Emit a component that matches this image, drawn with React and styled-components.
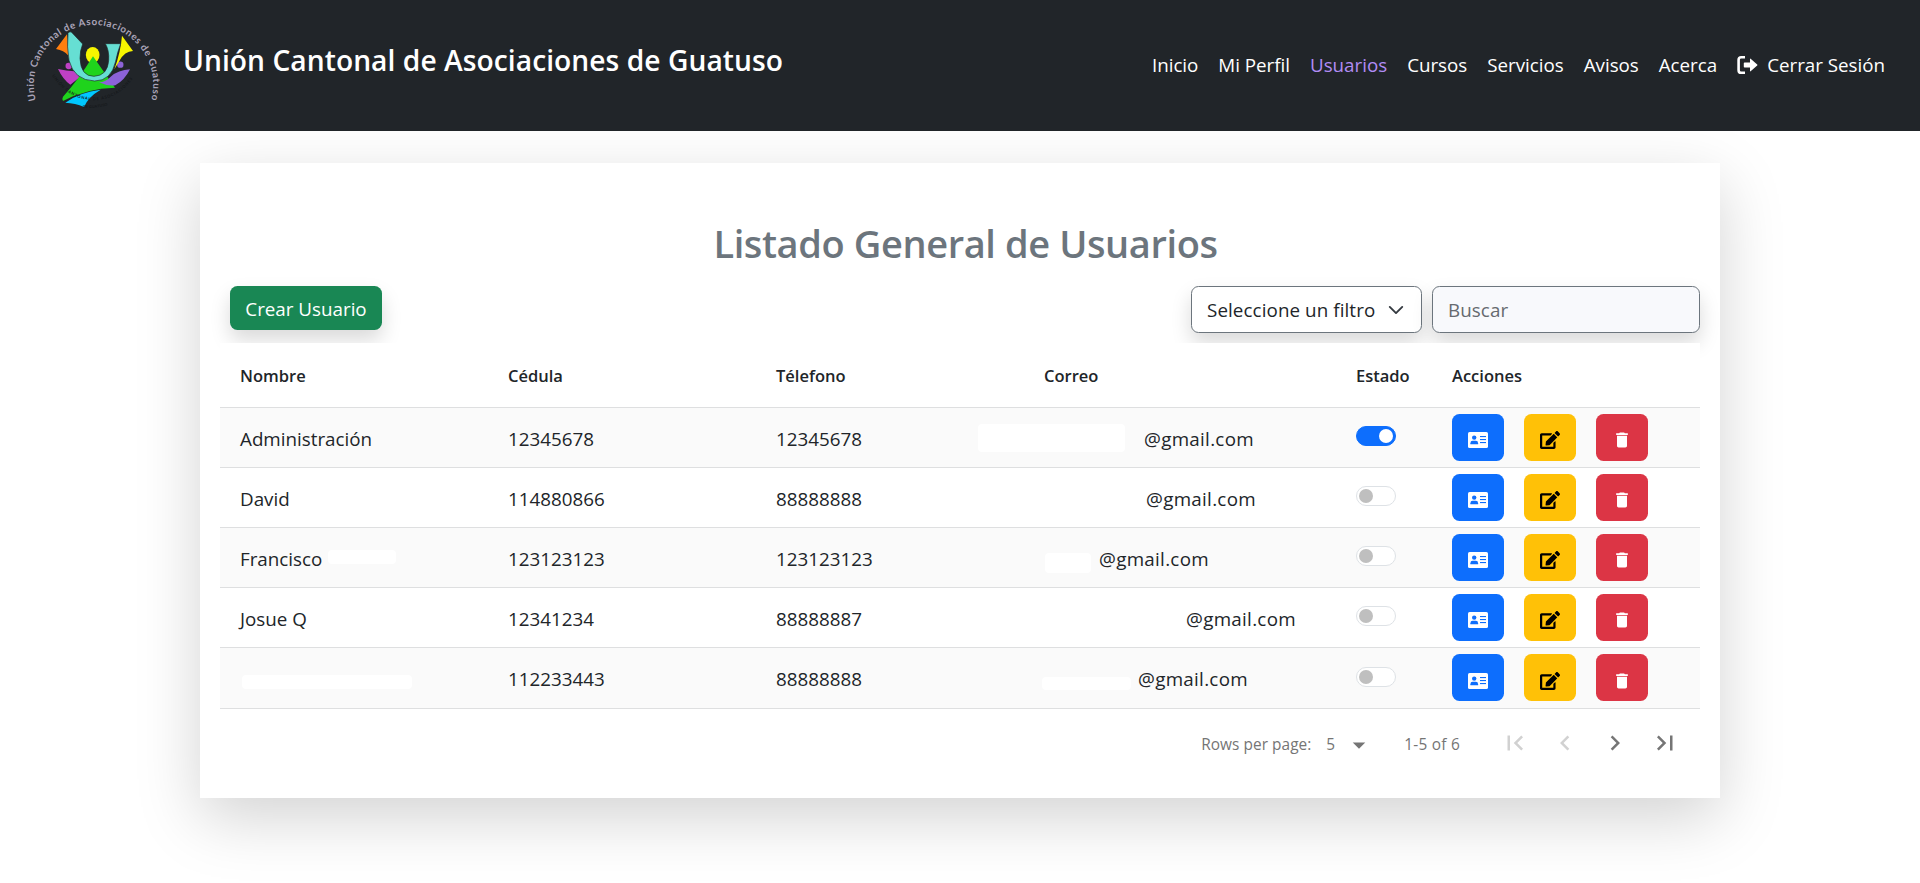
import React from "react";
import styled, { createGlobalStyle } from "styled-components";
import { FaEdit } from "react-icons/fa";
import { MdDelete, MdFirstPage, MdChevronLeft, MdChevronRight, MdLastPage, MdArrowDropDown } from "react-icons/md";

const GlobalStyle = createGlobalStyle`
  *, *::before, *::after { box-sizing: border-box; }
  body {
    margin: 0;
    min-height: 100vh;
    background: #fff;
    color: #212529;
    font-family: "Open Sans", "Noto Sans", sans-serif;
    font-size: 18.8px;
    line-height: 30px;
  }
`;

const Navbar = styled.nav`
  position: relative;
  display: flex;
  align-items: flex-start;
  height: 131px;
  padding: 12px 25px 0;
  background: #212529;
  color: #fff;
`;

const Brand = styled.div`
  display: flex;
  align-items: flex-start;
  gap: 16px;
  flex: 1;
`;

const BrandName = styled.span`
  margin-top: 30px;
  font-size: 28.2px;
  font-weight: 600;
  line-height: 36px;
  letter-spacing: 0.05px;
  white-space: nowrap;
`;

const NavLinks = styled.div`
  display: flex;
  margin-top: 38px;
`;

const NavLink = styled.a`
  display: flex;
  align-items: center;
  gap: 9px;
  padding: 0 10px;
  color: ${(p) => (p.$active ? "#b18cf5" : "#fff")};
  letter-spacing: -0.02px;
  white-space: nowrap;
`;

const Card = styled.main`
  width: 1520px;
  height: 635px;
  margin: 32px auto 0;
  padding: 56px 20px 0;
  background: #fff;
  box-shadow: 0 20px 60px rgba(0, 0, 0, 0.175);
`;

const Heading = styled.h1`
  margin: 0 0 19px;
  padding-left: 11px;
  color: #6c757d;
  font-size: 38px;
  font-weight: 600;
  line-height: 48px;
  letter-spacing: -0.4px;
  text-align: center;
`;

const Toolbar = styled.div`
  display: flex;
  align-items: flex-start;
  gap: 10px;
  height: 57px;
  padding-left: 10px;
`;

const CreateButton = styled.button`
  width: 152px;
  height: 44px;
  margin-right: auto;
  padding: 1px 0 0;
  border: 0;
  border-radius: 7.5px;
  background: #198754;
  box-shadow: 0 10px 20px rgba(0, 0, 0, 0.15);
  color: #fff;
  font: inherit;
`;

const Field = styled.div`
  display: flex;
  align-items: center;
  justify-content: space-between;
  width: ${(p) => p.$width};
  height: 47px;
  padding: 0 15px;
  border: 1px solid #6c757d;
  border-radius: 7.5px;
  background: ${(p) => (p.$muted ? "#f8f9fc" : "#fff")};
  box-shadow: 0 10px 20px rgba(0, 0, 0, 0.15);
  color: ${(p) => (p.$muted ? "#666a6f" : "#212529")};
  letter-spacing: 0.09px;
  white-space: nowrap;
`;

const Table = styled.div`
  position: relative;
  background: #fff;
`;

const Row = styled.div`
  display: grid;
  grid-template-columns: 268px 268px 268px 312px 96px 268px;
  height: ${(p) => p.$height || "60px"};
  border-bottom: 1px solid #dedfe0;
  background: ${(p) => (p.$striped ? "#fafafa" : "#fff")};
`;

const HeaderCell = styled.div`
  padding: 18px 0 0 20px;
  font-size: 16.5px;
  font-weight: 600;
`;

const Cell = styled.div`
  display: flex;
  align-items: flex-start;
  padding: 16px 0 0 20px;
  letter-spacing: ${(p) => p.$spacing || "0"};
  white-space: nowrap;
`;

const Blank = styled.span`
  flex: none;
  width: ${(p) => p.$width}px;
  height: ${(p) => p.$height || 0}px;
  margin: ${(p) => p.$margin || "0"};
  border-radius: 4px;
  background: #fff;
`;

const Switch = styled.span`
  display: flex;
  justify-content: ${(p) => (p.$on ? "flex-end" : "flex-start")};
  align-items: center;
  width: 40px;
  height: 20px;
  margin-top: ${(p) => (p.$low ? 3 : 2)}px;
  padding: 0 2px;
  border: 1px solid ${(p) => (p.$on ? "#0d6efd" : "#dee2e6")};
  border-radius: 10px;
  background: ${(p) => (p.$on ? "#0d6efd" : "#fff")};
  &::before {
    content: "";
    width: 14px;
    height: 14px;
    border-radius: 50%;
    background: ${(p) => (p.$on ? "#fff" : "#bfbfbf")};
  }
`;

const Actions = styled.div`
  display: flex;
  gap: 20px;
  padding: 6px 0 0 20px;
`;

const ActionButton = styled.button`
  display: flex;
  justify-content: center;
  width: 52px;
  height: 47px;
  padding: ${(p) => (p.$low ? 17 : 16)}px 0 0;
  border: 0;
  border-radius: 7.5px;
  background: ${(p) => p.$bg};
  color: ${(p) => p.$fg || "#fff"};
  svg { width: 20px; height: 20px; flex: none; }
`;

const Pagination = styled.footer`
  display: flex;
  align-items: center;
  justify-content: flex-end;
  height: 70px;
  padding: 1px 10px 0 0;
  color: #757575;
  font-size: 15.4px;
  letter-spacing: 0.05px;
  white-space: nowrap;
`;

const PageSize = styled.span`
  display: flex;
  align-items: center;
  margin: 0 30px 0 15px;
  svg { width: 30px; height: 30px; margin-left: 9px; }
`;

const PageRange = styled.span`
  margin-right: 30px;
  letter-spacing: 0.25px;
`;

const PageButton = styled.button`
  display: flex;
  align-items: center;
  justify-content: center;
  width: 50px;
  height: 50px;
  margin-bottom: 3px;
  padding: 0;
  border: 0;
  background: none;
  color: ${(p) => (p.disabled ? "#d1d1d1" : "#757575")};
  svg { width: 30px; height: 30px; }
`;

const Logo = () => (
  <svg width="142" height="105" viewBox="75 35 426 315" aria-hidden="true">
    <path id="ring" d="M108 300 A179 179 0 1 1 452 305" fill="none" />
    <path id="smile" d="M156 226 Q205 300 285 300 Q365 295 408 218" fill="none" />
    <path id="base" d="M248 322 Q290 326 330 312" fill="none" />
    <text fill="#aaa4b8" fontFamily="Lato, sans-serif" fontWeight="700" fontSize="29.5" letterSpacing="2.6">
      <textPath href="#ring" textLength="658">Unión Cantonal de Asociaciones de Guatuso</textPath>
    </text>
    <path d="M201 102 L168 146 Q192 150 204 165 L219 212 Q203 160 201 102Z" fill="#ff7f0e" />
    <ellipse cx="278" cy="164" rx="20.5" ry="24" fill="#f7f500" />
    <circle cx="206" cy="197" r="9.5" fill="#bf40c4" />
    <path d="M174 206 Q200 211 222 213 L240 230 L211 253 Q189 238 174 206Z" fill="#bf40c4" />
    <path d="M279 168 L345 262 Q260 264 189 302 Q185 296 189 289 Q232 243 279 168Z" fill="#1fd31c" />
    <path d="M196 307 Q240 275 302 268 Q264 290 252 320 Q226 308 196 307Z" fill="#00c8ff" />
    <circle cx="361" cy="193" r="9.5" fill="#8c62d8" />
    <path d="M390 207 Q355 209 332 229 Q318 245 297 246 Q322 258 346 255 Q374 240 390 207Z" fill="#8c62d8" />
    <path d="M366 106 L399 152 Q374 152 358 182 L343 207 Q362 155 366 106Z" fill="#f7f500" />
    <path
      d="M204 99 Q208 92 214 95 L248 131 Q240 150 240 174 Q242 228 282 228 Q323 226 326 180 Q328 150 316 130 L362 130 Q352 156 347 183 Q334 242 284 242 Q222 240 207 180 Q200 140 204 99Z"
      fill="#66dfd3"
      stroke="#212529"
      strokeWidth="2"
    />
    <text fill="#15181b" fontFamily="Lato, sans-serif" fontWeight="700" fontSize="12">
      <textPath href="#smile" textLength="290">UNIÓN CANTONAL DE ASOCIACIONES</textPath>
    </text>
    <text fill="#15181b" fontFamily="Lato, sans-serif" fontWeight="700" fontSize="11">
      <textPath href="#base" textLength="76">DE GUATUSO</textPath>
    </text>
  </svg>
);

const SignOut = () => (
  <svg width="21" height="20" viewBox="0 0 21 20" aria-hidden="true">
    <path d="M8 2.2H4.2Q1.6 2.2 1.6 4.8V15.2Q1.6 17.8 4.2 17.8H8" fill="none" stroke="#fff" strokeWidth="2.6" />
    <path d="M7.6 7.4H13V4.2Q13 3.2 13.9 3.9L20.2 9.4Q20.8 10 20.2 10.6L13.9 16.1Q13 16.8 13 15.8V12.6H7.6Q6.8 12.6 6.8 11.8V8.2Q6.8 7.4 7.6 7.4Z" fill="#fff" />
  </svg>
);

const AddressCard = () => (
  <svg viewBox="0 0 20 20" aria-hidden="true">
    <rect y="2" width="20" height="16" rx="1.6" fill="#fff" />
    <g fill="#0d6efd">
      <circle cx="6.2" cy="7.6" r="2.2" />
      <path d="M2.4 14.2V13.2Q2.4 10.8 4.6 10.8H7.8Q10.1 10.8 10.1 13.2V14.2Z" />
      <rect x="12" y="6" width="6" height="1.1" />
      <rect x="12" y="9" width="6" height="1.1" />
      <rect x="12" y="12" width="6" height="1.1" />
    </g>
  </svg>
);

const Chevron = () => (
  <svg width="20" height="20" viewBox="0 0 16 16" fill="none" stroke="#343a40" strokeWidth="1.5" strokeLinecap="round" strokeLinejoin="round">
    <path d="M3 5.5l5 5 5-5" />
  </svg>
);

const LINKS = [
  { label: "Inicio" },
  { label: "Mi Perfil" },
  { label: "Usuarios", active: true },
  { label: "Cursos" },
  { label: "Servicios" },
  { label: "Avisos" },
  { label: "Acerca" },
];

const COLUMNS = ["Nombre", "Cédula", "Télefono", "Correo", "Estado", "Acciones"];

const USERS = [
  { name: "Administración", id: "12345678", phone: "12345678", mail: { $width: 147, $height: 28, $margin: "0 19px 0 -66px" }, on: true },
  { name: "David", id: "114880866", phone: "88888888", mail: { $width: 102 } },
  { name: "Francisco", nameBlank: { $width: 68, $height: 14, $margin: "6px 0 0 6px" }, id: "123123123", phone: "123123123", mail: { $width: 46, $height: 20, $margin: "9px 8px 0 1px" } },
  { name: "Josue Q", id: "12341234", phone: "88888887", mail: { $width: 142 } },
  { name: "", nameBlank: { $width: 170, $height: 14, $margin: "11px 0 0 2px" }, id: "112233443", phone: "88888888", mail: { $width: 89, $height: 13, $margin: "13px 7px 0 -2px" } },
];

export default function App() {
  return (
    <>
      <GlobalStyle />
      <Navbar>
        <Brand>
          <Logo />
          <BrandName>Unión Cantonal de Asociaciones de Guatuso</BrandName>
        </Brand>
        <NavLinks>
          {LINKS.map((l) => (
            <NavLink key={l.label} $active={l.active}>{l.label}</NavLink>
          ))}
          <NavLink><SignOut />Cerrar Sesión</NavLink>
        </NavLinks>
      </Navbar>
      <Card>
        <Heading>Listado General de Usuarios</Heading>
        <Toolbar>
          <CreateButton>Crear Usuario</CreateButton>
          <Field $width="231px">Seleccione un filtro<Chevron /></Field>
          <Field $width="268px" $muted>Buscar</Field>
        </Toolbar>
        <Table>
          <Row $height="65px">
            {COLUMNS.map((c) => <HeaderCell key={c}>{c}</HeaderCell>)}
          </Row>
          {USERS.map((u, i) => {
            const last = i === USERS.length - 1;
            return (
              <Row key={u.id} $striped={i % 2 === 0} $height={last ? "61px" : "60px"}>
                <Cell>{u.name}{u.nameBlank && <Blank {...u.nameBlank} />}</Cell>
                <Cell>{u.id}</Cell>
                <Cell>{u.phone}</Cell>
                <Cell $spacing="0.3px"><Blank {...u.mail} />@gmail.com</Cell>
                <Cell><Switch $on={u.on} $low={last} /></Cell>
                <Actions>
                  <ActionButton $bg="#0d6efd" $low={last}><AddressCard /></ActionButton>
                  <ActionButton $bg="#ffc107" $fg="#000" $low={last}><FaEdit /></ActionButton>
                  <ActionButton $bg="#dc3545" $low={last}><MdDelete /></ActionButton>
                </Actions>
              </Row>
            );
          })}
        </Table>
        <Pagination>
          Rows per page:
          <PageSize>5<MdArrowDropDown /></PageSize>
          <PageRange>1-5 of 6</PageRange>
          <PageButton disabled><MdFirstPage /></PageButton>
          <PageButton disabled><MdChevronLeft /></PageButton>
          <PageButton><MdChevronRight /></PageButton>
          <PageButton><MdLastPage /></PageButton>
        </Pagination>
      </Card>
    </>
  );
}
